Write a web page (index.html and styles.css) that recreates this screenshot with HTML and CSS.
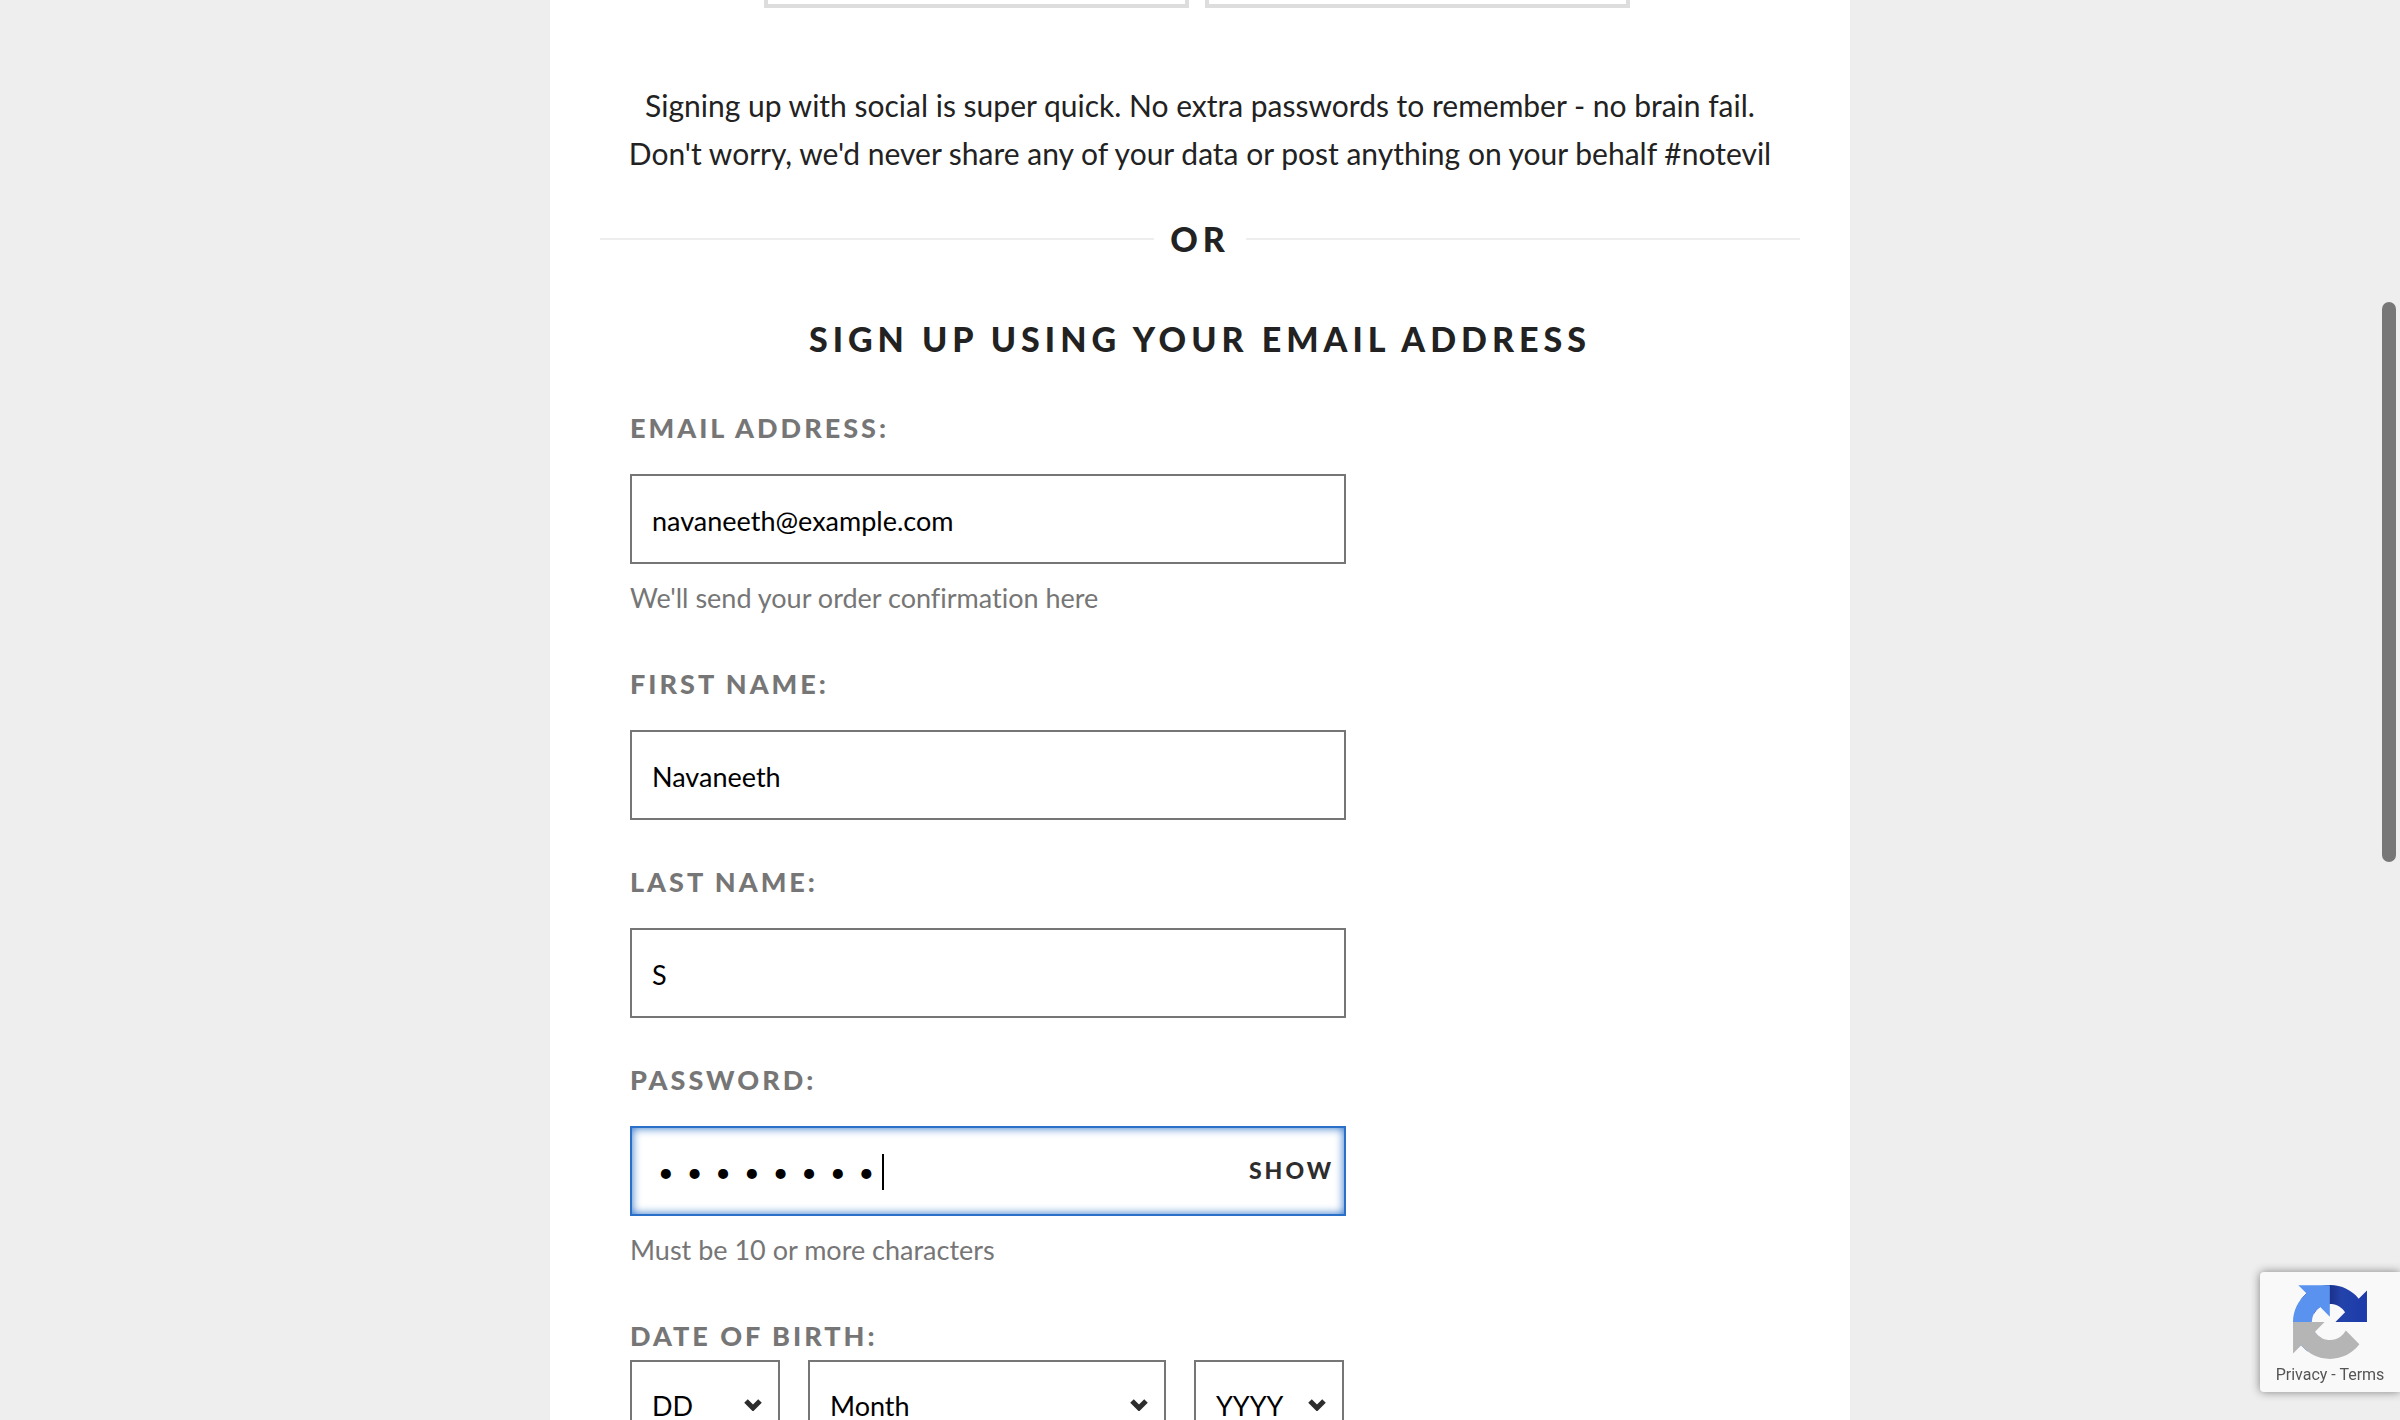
FILE: index.html
```html
<!DOCTYPE html>
<html lang="en">
<head>
<meta charset="utf-8">
<meta name="viewport" content="width=device-width, initial-scale=1">
<title>Sign up</title>
<link rel="stylesheet" href="styles.css">
</head>
<body>
<main class="panel">
  <div class="social">
    <button class="social-button" type="button" aria-label="Google"></button>
    <button class="social-button" type="button" aria-label="Facebook"></button>
  </div>
  <p class="intro">Signing up with social is super quick. No extra passwords to remember - no brain fail.<br>Don't worry, we'd never share any of your data or post anything on your behalf #notevil</p>
  <div class="divider"><span class="divider-text">OR</span></div>
  <h2 class="title">SIGN UP USING YOUR EMAIL ADDRESS</h2>
  <form class="form">
    <div class="field">
      <label class="label" for="email">EMAIL ADDRESS:</label>
      <input class="input" id="email" type="email" value="navaneeth@example.com">
      <p class="hint">We'll send your order confirmation here</p>
    </div>
    <div class="field">
      <label class="label" for="first">FIRST NAME:</label>
      <input class="input" id="first" type="text" value="Navaneeth">
    </div>
    <div class="field">
      <label class="label" for="last">LAST NAME:</label>
      <input class="input" id="last" type="text" value="S">
    </div>
    <div class="field">
      <label class="label" for="password">PASSWORD:</label>
      <div class="password">
        <input class="input input-active" id="password" type="password" value="abcdefgh">
        <span class="caret"></span>
        <button class="show" type="button">SHOW</button>
      </div>
      <p class="hint">Must be 10 or more characters</p>
    </div>
    <fieldset class="dob">
      <legend class="label">DATE OF BIRTH:</legend>
      <div class="dates">
        <div class="date">
          <select class="select" aria-label="Day"><option>DD</option></select>
          <svg class="chevron" viewBox="0 0 18 12"><path d="M2 2 9 9 16 2"/></svg>
        </div>
        <div class="date date-month">
          <select class="select" aria-label="Month"><option>Month</option></select>
          <svg class="chevron" viewBox="0 0 18 12"><path d="M2 2 9 9 16 2"/></svg>
        </div>
        <div class="date">
          <select class="select" aria-label="Year"><option>YYYY</option></select>
          <svg class="chevron" viewBox="0 0 18 12"><path d="M2 2 9 9 16 2"/></svg>
        </div>
      </div>
    </fieldset>
  </form>
</main>
<div class="scrollbar"></div>
<aside class="recaptcha">
  <svg class="recaptcha-logo" viewBox="0 0 64 64">
    <defs><linearGradient id="navy"><stop offset=".42" stop-color="#1b2f88"/><stop offset=".62" stop-color="#2343ab"/><stop offset="1" stop-color="#1c3aa9"/></linearGradient></defs>
    <path fill="url(#navy)" d="M64 31.955l-.033-1.37V4.687l-7.16 7.16C50.948 4.674 42.033.093 32.05.093c-10.4 0-19.622 4.96-25.458 12.64l11.736 11.86a15.55 15.55 0 0 1 4.754-5.334c2.05-1.6 4.952-2.906 8.968-2.906.485 0 .86.057 1.135.163 4.976.393 9.288 3.14 11.828 7.124l-8.307 8.307L64 31.953"/>
    <path fill="#5a92ef" d="M31.862.094l-1.37.033H4.594l7.16 7.16C4.58 13.147 0 22.06 0 32.046c0 10.4 4.96 19.622 12.64 25.458L24.5 45.768a15.55 15.55 0 0 1-5.334-4.754c-1.6-2.05-2.906-4.952-2.906-8.968 0-.485.057-.86.163-1.135.393-4.976 3.14-9.288 7.124-11.828l8.307 8.307L31.86.095"/>
    <path fill="#b5b5b5" d="M.001 32.045l.033 1.37v25.898l7.16-7.16c5.86 7.173 14.774 11.754 24.76 11.754 10.4 0 19.622-4.96 25.458-12.64l-11.736-11.86a15.55 15.55 0 0 1-4.754 5.334c-2.05 1.6-4.952 2.906-8.968 2.906-.485 0-.86-.057-1.135-.163-4.976-.393-9.288-3.14-11.828-7.124l8.307-8.307c-10.522.04-22.4.066-27.295-.005"/>
  </svg>
  <div class="recaptcha-links"><a href="#">Privacy</a> - <a href="#">Terms</a></div>
</aside>
</body>
</html>
```
FILE: styles.css
```css
* { box-sizing: border-box; }

body {
  margin: 0;
  height: 100vh;
  overflow: hidden;
  background: #eee;
  color: #222;
  font-family: Lato, "Liberation Sans", sans-serif;
  font-variant-ligatures: none;
}

.panel {
  max-width: 1300px;
  min-height: 100vh;
  margin: 0 auto;
  padding: 0 50px;
  background: #fff;
}

.social {
  display: flex;
  justify-content: center;
  gap: 16px;
  padding-right: 6px;
}

.social-button {
  width: 425px;
  height: 8px;
  padding: 0;
  border: 4px solid #ddd;
  border-top: 0;
  background: #fff;
}

.intro {
  margin: 73px 0 40px;
  font-size: 30px;
  line-height: 48px;
  text-align: center;
}

.divider {
  display: flex;
  align-items: center;
  gap: 16px;
}

.divider::before,
.divider::after {
  content: "";
  flex: 1;
  height: 2px;
  background: #eee;
}

.divider-text,
.title {
  font-size: 34px;
  font-weight: 900;
  line-height: 44px;
  letter-spacing: 5px;
}

.title {
  margin: 56px 0 49px;
  text-align: center;
}

.form {
  display: flex;
  flex-direction: column;
  gap: 44px;
  max-width: 746px;
  padding: 0 0 0 30px;
}

.label {
  display: block;
  padding: 0;
  color: #767676;
  font-size: 27px;
  font-weight: 900;
  line-height: 36px;
  letter-spacing: 3px;
}

.input {
  display: block;
  width: 100%;
  height: 90px;
  margin-top: 28px;
  padding: 2px 20px 0;
  border: 2px solid #767676;
  border-radius: 0;
  background: #fff;
  color: #000;
  font: 27px Lato, "Liberation Sans", sans-serif;
  outline: 0;
}

.hint {
  margin: 16px 0 6px;
  color: #767676;
  font-size: 27px;
  line-height: 36px;
}

.password { position: relative; }

.input-active {
  padding: 0 26px;
  border-color: #2a70c8;
  box-shadow: inset 0 0 10px #2a70c8;
  letter-spacing: 13px;
}

.caret {
  position: absolute;
  left: 252px;
  top: 28px;
  width: 2px;
  height: 36px;
  background: #000;
}

.show {
  position: absolute;
  top: 28px;
  right: 12px;
  padding: 0;
  border: 0;
  background: none;
  color: #2d2d2d;
  font: 900 23px/32px Lato, "Liberation Sans", sans-serif;
  letter-spacing: 3px;
}

.dob {
  min-width: 0;
  margin: 0;
  padding: 0;
  border: 0;
}

.dates {
  display: flex;
  gap: 28px;
  padding: 6px 2px 0 0;
}

.date {
  position: relative;
  flex: 0 0 150px;
}

.date-month { flex: 1; }

.select {
  width: 100%;
  height: 90px;
  padding: 0 20px;
  border: 2px solid #767676;
  border-radius: 0;
  appearance: none;
  background: #fff;
  color: #000;
  font: 27px Lato, "Liberation Sans", sans-serif;
}

.chevron {
  position: absolute;
  top: 39px;
  right: 18px;
  width: 18px;
  height: 12px;
  fill: none;
  stroke: #2d2d2d;
  stroke-width: 5;
}

.scrollbar {
  position: fixed;
  top: 302px;
  right: 4px;
  width: 14px;
  height: 560px;
  border-radius: 7px;
  background: #777;
}

.recaptcha {
  position: fixed;
  right: 0;
  bottom: 28px;
  display: flex;
  flex-direction: column;
  align-items: center;
  width: 140px;
  height: 120px;
  padding-top: 13px;
  border-radius: 4px 0 0 4px;
  background: #f9f9f9;
  box-shadow: 0 0 10px #808080;
}

.recaptcha-logo {
  width: 74px;
  height: 74px;
}

.recaptcha-links {
  margin-top: 6px;
  color: #555;
  font: 16px/20px Roboto, sans-serif;
}

.recaptcha-links a {
  color: inherit;
  text-decoration: none;
}
```
